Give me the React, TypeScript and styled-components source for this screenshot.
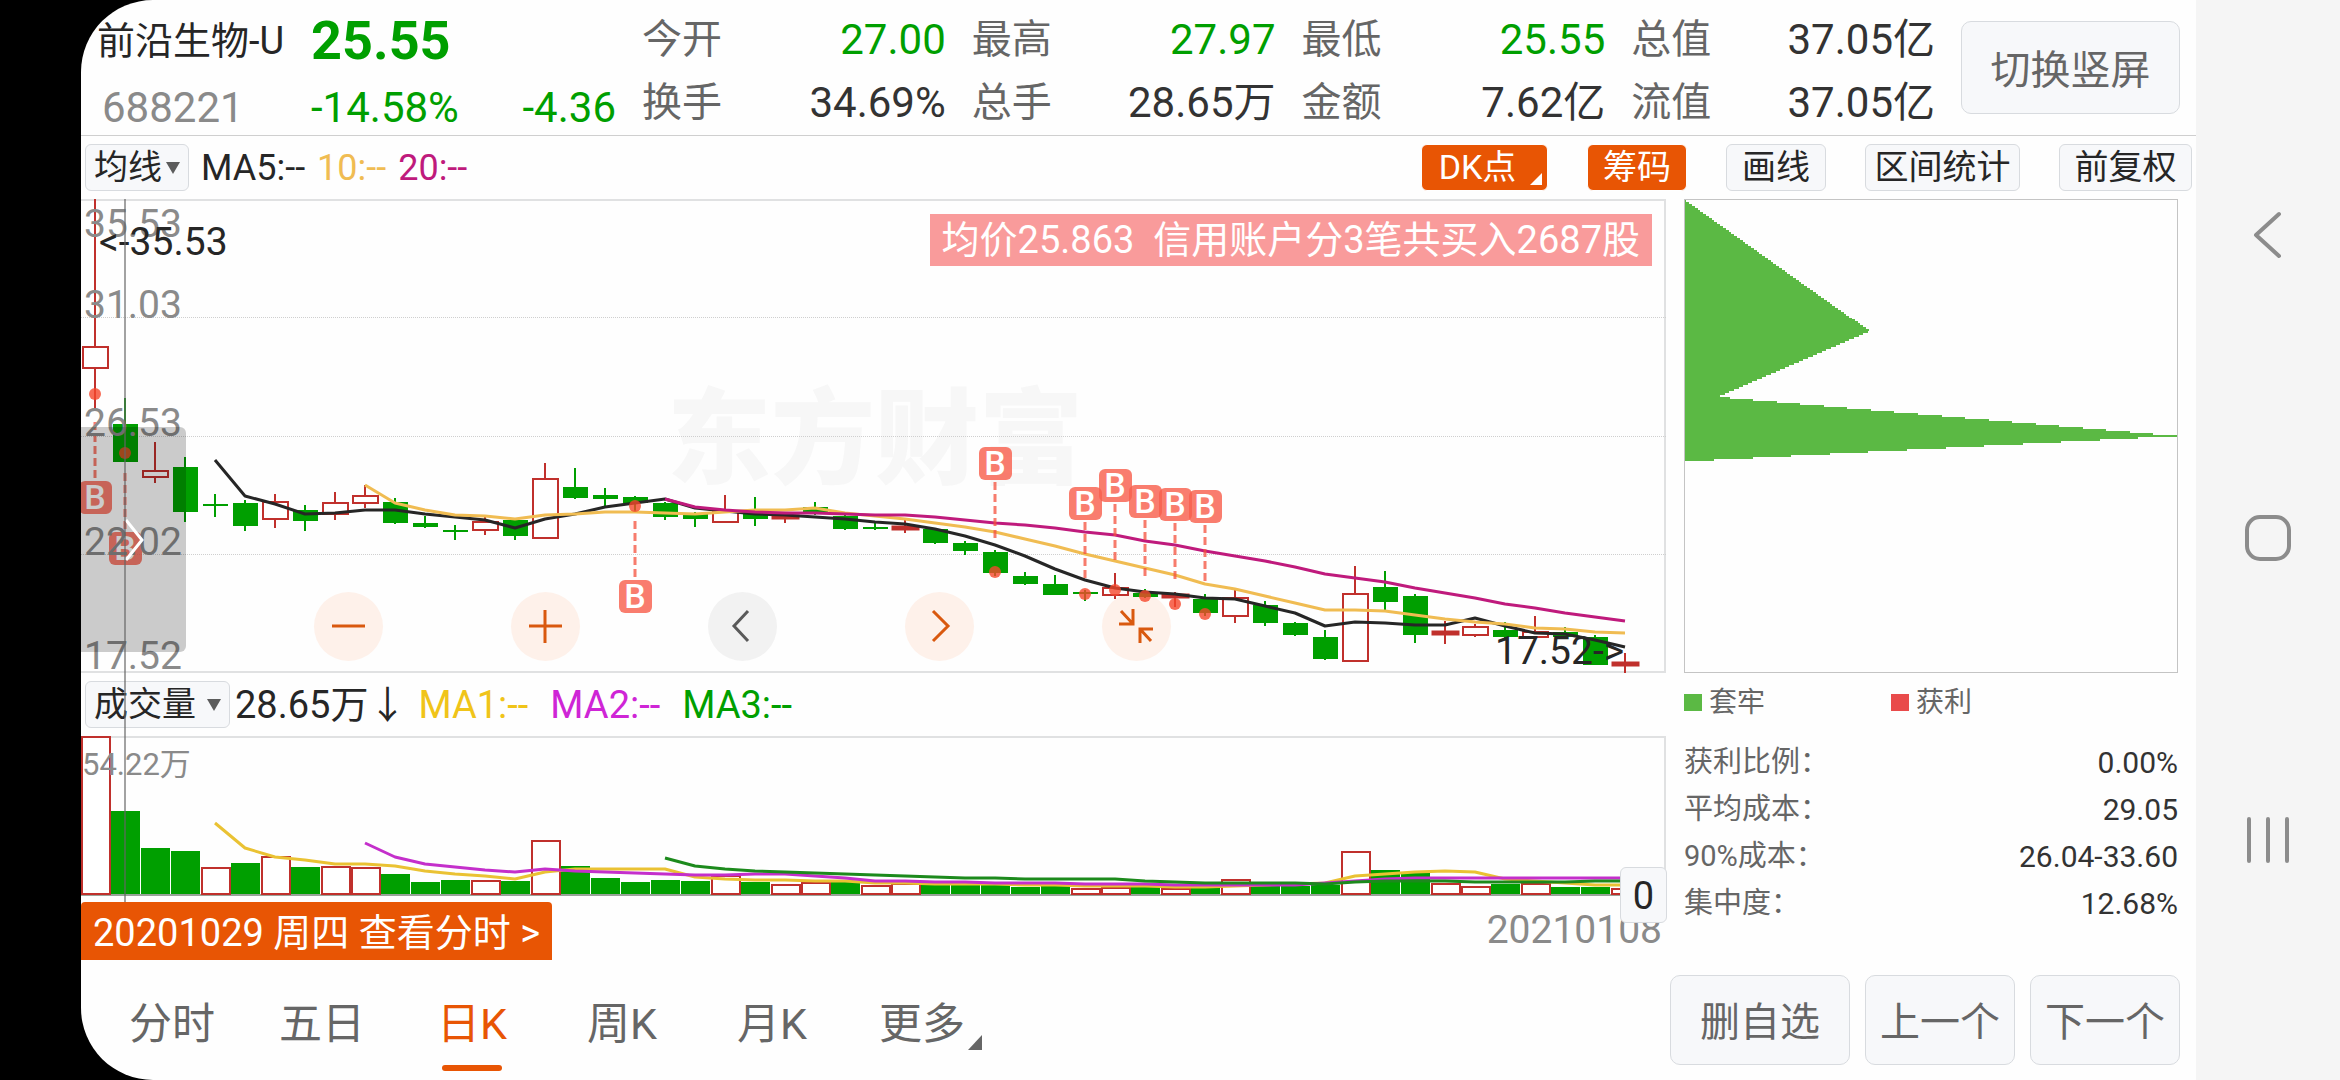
import React from 'react';
import styled, { createGlobalStyle, css } from 'styled-components';

const GREEN = '#009f00';
const RED = '#c0302c';
const ORANGE = '#e85504';
const LINE = '#e0e1e2';
const INK = '#262626';
const MUTED = '#666666';
const FAINT = '#8a8a8a';
const PANEL = '#f7f8fa';
const EDGE = '#d8dbdf';

const GlobalStyle = createGlobalStyle`
  *, *::before, *::after { box-sizing: border-box; }
  body {
    margin: 0;
    background: #000;
    color: ${INK};
    font-family: Roboto, "Noto Sans CJK SC", sans-serif;
    font-size: 38px;
  }
  button, select { font-family: inherit; margin: 0; cursor: pointer; }
  dl, dd, dt { margin: 0; }
`;

/* ---------- shell ---------- */

const Device = styled.div`
  display: flex;
  min-height: 100vh;
  padding-left: 81px;
  background: #000;
`;

const Screen = styled.main`
  flex: 1;
  min-width: 0;
  display: flex;
  flex-direction: column;
  background: #fefefe;
  border-radius: 72px 0 0 72px;
  overflow: hidden;
`;

const SystemBar = styled.nav`
  flex: none;
  width: 144px;
  padding: 211px 0 216px;
  display: flex;
  flex-direction: column;
  align-items: center;
  justify-content: space-between;
  background: #f5f5f5;
`;

const SystemKey = styled.button`
  width: 48px;
  height: 48px;
  padding: 0;
  border: 0;
  background: none;
  svg { display: block; }
`;

/* ---------- header ---------- */

const Header = styled.header`
  display: flex;
  height: 136px;
  padding-right: 16px;
  border-bottom: 1px solid #cfcfcf;
`;

const Identity = styled.section`
  flex: none;
  width: 561px;
  padding: 8px 26px 0 16px;
  display: grid;
  grid-template-columns: 214px 1fr auto;
  grid-template-rows: 66px 60px;
  align-items: center;
  row-gap: 4px;
  white-space: nowrap;
`;

const StockName = styled.h1`
  margin: 0;
  font-size: 38px;
  font-weight: 400;
  line-height: 60px;
`;

const Price = styled.strong`
  grid-column: span 2;
  font-size: 54px;
  font-weight: 700;
  line-height: 64px;
  color: ${GREEN};
`;

const Figure = styled.span<{ $color?: string; $indent?: boolean }>`
  font-size: 42px;
  line-height: 60px;
  color: ${p => p.$color ?? '#333'};
  padding-left: ${p => (p.$indent ? '5px' : 0)};
`;

const Stats = styled.dl`
  flex: 1;
  padding-top: 8px;
  display: grid;
  grid-template-columns: repeat(4, 1fr);
  grid-auto-rows: 63px;
  column-gap: 26px;
`;

const Stat = styled.div`
  display: flex;
  justify-content: space-between;
  align-items: center;
  white-space: nowrap;
  dt { font-size: 40px; line-height: 60px; color: ${MUTED}; }
`;

const SoftButton = styled.button<{ $width: number; $height: number }>`
  flex: none;
  width: ${p => p.$width}px;
  height: ${p => p.$height}px;
  padding: 6px 0 0;
  border: 1px solid ${EDGE};
  border-radius: 10px;
  background: ${PANEL};
  color: ${MUTED};
  font-size: 40px;
  line-height: 60px;
  white-space: nowrap;
`;

const RotateButton = styled(SoftButton)`
  margin: 21px 0 0 26px;
`;

/* ---------- toolbars ---------- */

const Toolbar = styled.div`
  display: flex;
  align-items: center;
  height: 63px;
  padding: 0 4px;
  white-space: nowrap;
`;

const Picker = styled.label<{ $width: number }>`
  position: relative;
  flex: none;
  width: ${p => p.$width}px;
  height: 47px;
  &::after {
    content: '';
    position: absolute;
    right: 9px;
    top: 18px;
    border: 7px solid transparent;
    border-top: 12px solid #5c5c5c;
    border-bottom: 0;
    pointer-events: none;
  }
  select {
    appearance: none;
    width: 100%;
    height: 100%;
    padding: 0 0 0 8px;
    border: 1px solid ${EDGE};
    border-radius: 6px;
    background: ${PANEL};
    color: ${INK};
    font-size: 34px;
    line-height: 45px;
  }
`;

const Averages = styled.div<{ $size: number; $gap: number }>`
  display: flex;
  gap: ${p => p.$gap}px;
  margin-left: 12px;
  font-size: ${p => p.$size}px;
  line-height: 48px;
`;

const VolumeNow = styled.span`
  margin-left: 5px;
  font-size: 38px;
  line-height: 48px;
`;

const Tint = styled.span<{ $color: string }>`
  color: ${p => p.$color};
`;

const Tools = styled.div`
  display: flex;
  gap: 39px;
  margin-left: auto;
`;

const Tool = styled.button<{ $active?: boolean; $width: number; $more?: boolean }>`
  position: relative;
  width: ${p => p.$width}px;
  height: 47px;
  padding: 0;
  border: 1px solid ${EDGE};
  border-radius: 6px;
  background: ${PANEL};
  color: ${INK};
  font-size: 34px;
  line-height: 45px;
  ${p => p.$active && css`
    border-color: #fff;
    background: ${ORANGE};
    color: #fff;
  `}
  ${p => p.$more && css`
    padding-right: 14px;
    &::after {
      content: '';
      position: absolute;
      right: 5px;
      bottom: 5px;
      border-left: 12px solid transparent;
      border-bottom: 12px solid #fff;
    }
  `}
`;

/* ---------- charts ---------- */

const Body = styled.div`
  display: flex;
  gap: 18px;
  padding-right: 18px;
`;

const ChartColumn = styled.section`
  position: relative;
  flex: 1;
  min-width: 0;
`;

const Crosshair = styled.div`
  position: absolute;
  top: 0;
  bottom: 58px;
  left: 43px;
  width: 2px;
  background: rgba(100, 100, 100, 0.6);
  pointer-events: none;
`;

const Pane = styled.div<{ $height: number }>`
  position: relative;
  height: ${p => p.$height}px;
  box-shadow: inset 0 2px ${LINE}, inset -2px 0 ${LINE}, inset 0 -2px ${LINE};
`;

const Plot = styled.svg`
  position: absolute;
  inset: 0;
  width: 100%;
  height: 100%;
  pointer-events: none;
`;

const Watermark = styled.div`
  position: absolute;
  left: 586px;
  top: 182px;
  font-size: 104px;
  font-weight: 900;
  line-height: 120px;
  color: #f7f7f7;
  white-space: nowrap;
`;

const Notice = styled.div`
  position: absolute;
  top: 15px;
  right: 14px;
  padding: 0 12px;
  background: #f99b9b;
  color: #fff;
  font-size: 38px;
  line-height: 52px;
  white-space: pre;
`;

const AxisLabel = styled.span<{ $top: number; $left?: number; $size?: number; $dark?: boolean }>`
  position: absolute;
  left: ${p => p.$left ?? 3}px;
  top: ${p => p.$top}px;
  font-size: ${p => p.$size ?? 39}px;
  line-height: 48px;
  color: ${p => (p.$dark ? INK : FAINT)};
  white-space: nowrap;
`;

const Controls = styled.div`
  position: absolute;
  left: 233px;
  top: 393px;
  display: flex;
  gap: 128px;
`;

const RoundButton = styled.button<{ $plain?: boolean }>`
  width: 69px;
  height: 69px;
  padding: 0;
  border: 0;
  border-radius: 50%;
  background: ${p => (p.$plain ? '#f2f2f2' : '#fef1ea')};
  color: ${p => (p.$plain ? '#5a5a5a' : '#d9590f')};
  svg { display: block; }
`;

const DrawerHandle = styled.button`
  position: absolute;
  left: 0;
  top: 228px;
  width: 105px;
  height: 225px;
  padding: 0;
  border: 0;
  border-radius: 0 6px 6px 0;
  background: rgba(0, 0, 0, 0.2);
  svg { display: block; }
`;

const ZeroTag = styled.span`
  position: absolute;
  right: -1px;
  top: 131px;
  width: 47px;
  height: 56px;
  border: 1px solid ${EDGE};
  border-radius: 6px;
  background: ${PANEL};
  font-size: 38px;
  line-height: 56px;
  text-align: center;
  z-index: 1;
`;

const DateRow = styled.div`
  display: flex;
  justify-content: space-between;
  margin-top: 6px;
  height: 58px;
  padding-right: 4px;
  color: ${FAINT};
  font-size: 39px;
  line-height: 56px;
`;

const DayLink = styled.a`
  padding: 3px 12px 0;
  border-radius: 4px 4px 0 0;
  background: ${ORANGE};
  color: #fff;
  font-size: 38px;
  line-height: 56px;
  text-decoration: none;
  white-space: nowrap;
`;

/* ---------- chip distribution ---------- */

const Side = styled.aside`
  flex: none;
  width: 494px;
`;

const ChipBox = styled.svg`
  display: block;
  width: 100%;
  height: 474px;
  border: 1px solid #c4c4c4;
`;

const Legend = styled.div`
  display: grid;
  grid-template-columns: 207px 1fr;
  align-content: center;
  height: 59px;
  margin-bottom: 7px;
  color: ${MUTED};
  font-size: 28px;
  line-height: 50px;
`;

const Key = styled.span<{ $color: string }>`
  display: flex;
  align-items: center;
  gap: 7px;
  &::before {
    content: '';
    width: 18px;
    height: 17px;
    background: ${p => p.$color};
  }
`;

const Fact = styled.div`
  display: flex;
  justify-content: space-between;
  height: 47px;
  line-height: 47px;
  dt { font-size: 29px; color: ${MUTED}; }
  dd { font-size: 30px; color: #333; }
`;

/* ---------- footer ---------- */

const Footer = styled.footer`
  display: flex;
  align-items: stretch;
  justify-content: space-between;
  height: 120px;
  padding: 0 16px;
`;

const Tabs = styled.div`
  display: flex;
`;

const Tab = styled.button<{ $active?: boolean; $more?: boolean }>`
  position: relative;
  width: 150px;
  padding: 7px 0 0;
  border: 0;
  background: none;
  color: ${p => (p.$active ? ORANGE : MUTED)};
  font-size: 43px;
  line-height: 60px;
  ${p => p.$active && css`
    &::after {
      content: '';
      position: absolute;
      left: 45px;
      bottom: 9px;
      width: 60px;
      height: 6px;
      border-radius: 3px;
      background: ${ORANGE};
    }
  `}
  ${p => p.$more && css`
    &::after {
      content: '';
      position: absolute;
      right: 15px;
      bottom: 30px;
      border-left: 14px solid transparent;
      border-bottom: 15px solid ${MUTED};
    }
  `}
`;

const Actions = styled.div`
  display: flex;
  align-items: center;
  gap: 15px;
`;

/* ---------- data ---------- */

type Candle = [up: 0 | 1, high: number, top: number, bottom: number, low: number];

const candles: Candle[] = [
  [1, 0, 148, 169, 209], [0, 199, 225, 263, 263], [1, 243, 272, 278, 284], [0, 258, 268, 313, 323],
  [0, 295, 305, 307, 318], [0, 301, 304, 327, 332], [1, 295, 303, 320, 329], [0, 306, 311, 322, 332],
  [1, 293, 304, 315, 321], [1, 286, 297, 304, 309], [0, 299, 303, 324, 325], [0, 317, 324, 328, 329],
  [0, 326, 331, 333, 341], [1, 318, 323, 331, 336], [0, 320, 321, 337, 341], [1, 264, 280, 339, 340],
  [0, 269, 288, 299, 300], [0, 289, 296, 300, 307], [0, 297, 298, 304, 313], [0, 303, 304, 318, 321],
  [0, 313, 315, 320, 328], [1, 296, 313, 323, 324], [0, 298, 313, 320, 327], [1, 313, 317, 319, 324],
  [0, 303, 308, 315, 316], [0, 316, 317, 330, 331], [0, 323, 328, 330, 331], [1, 321, 328, 330, 334],
  [0, 329, 330, 344, 345], [0, 342, 344, 352, 356], [0, 351, 353, 374, 377], [0, 373, 377, 385, 386],
  [0, 376, 385, 396, 396], [0, 391, 393, 395, 402], [1, 374, 389, 396, 400], [0, 390, 394, 398, 399],
  [1, 393, 396, 398, 408], [0, 395, 400, 414, 417], [1, 391, 399, 417, 424], [0, 402, 406, 424, 427],
  [0, 423, 424, 436, 437], [0, 431, 438, 460, 461], [1, 367, 395, 462, 462], [0, 372, 388, 403, 411],
  [0, 395, 397, 436, 444], [1, 422, 433, 435, 445], [1, 425, 428, 436, 438], [0, 423, 431, 438, 439],
  [1, 417, 433, 438, 439], [0, 428, 433, 438, 439], [0, 436, 438, 466, 466], [1, 454, 464, 466, 474],
];

const ma5 = [261, 297, 305, 315, 314, 311, 311, 315, 318, 321, 329, 320, 315, 308, 304, 300, 309, 312, 315, 316, 318, 320, 323, 325, 330, 337, 346, 357, 370, 381, 389, 393, 395, 399, 400, 407, 414, 427, 423, 424, 426, 426, 419, 427, 434, 435, 441, 448];
const ma10 = [286, 304, 311, 316, 317, 320, 316, 315, 313, 313, 314, 315, 313, 311, 311, 309, 314, 317, 320, 324, 328, 333, 340, 347, 355, 362, 369, 376, 385, 390, 397, 404, 411, 411, 412, 416, 420, 423, 425, 429, 430, 433, 434];
const ma20 = [300, 308, 311, 313, 314, 314, 315, 316, 316, 318, 321, 324, 326, 329, 333, 336, 342, 346, 352, 357, 362, 368, 375, 379, 383, 389, 394, 399, 405, 409, 414, 418, 422];

const volumes: [up: 0 | 1, top: number][] = [
  [1, 0], [0, 75], [0, 112], [0, 115], [1, 131], [0, 127], [1, 120], [0, 131], [1, 130], [1, 131],
  [0, 138], [0, 146], [0, 144], [1, 144], [0, 145], [1, 104], [0, 130], [0, 142], [0, 146], [0, 144],
  [0, 145], [1, 139], [0, 146], [1, 148], [1, 146], [0, 146], [1, 149], [1, 147], [0, 148], [0, 148],
  [0, 149], [0, 151], [0, 149], [1, 152], [1, 151], [0, 151], [1, 152], [0, 151], [1, 143], [0, 149],
  [0, 150], [0, 149], [1, 115], [0, 134], [0, 136], [1, 147], [1, 150], [0, 148], [1, 147], [0, 151],
  [0, 151], [1, 152],
];

const vma1 = [87, 112, 121, 124, 128, 128, 130, 135, 138, 140, 143, 136, 133, 133, 133, 133, 141, 143, 144, 144, 145, 145, 147, 147, 148, 148, 148, 149, 149, 150, 150, 150, 151, 151, 150, 149, 148, 147, 140, 138, 136, 135, 136, 143, 145, 147, 149, 149];
const vma2 = [107, 121, 128, 131, 134, 136, 133, 135, 136, 137, 138, 139, 139, 138, 138, 140, 142, 145, 145, 146, 146, 147, 147, 147, 148, 148, 148, 149, 149, 149, 149, 149, 147, 145, 143, 142, 142, 142, 142, 142, 142, 142, 142];
const vma3 = [122, 130, 133, 135, 136, 137, 138, 139, 140, 141, 142, 142, 143, 143, 143, 143, 145, 146, 147, 147, 147, 147, 148, 146, 145, 145, 145, 146, 146, 146, 146, 145, 145];

const buys: { day: number; badge: number; dot: number }[] = [
  { day: 0, badge: 298, dot: 195 },
  { day: 1, badge: 349, dot: 254 },
  { day: 18, badge: 397, dot: 307 },
  { day: 30, badge: 264, dot: 373 },
  { day: 33, badge: 304, dot: 395 },
  { day: 34, badge: 286, dot: 391 },
  { day: 35, badge: 302, dot: 397 },
  { day: 36, badge: 305, dot: 405 },
  { day: 37, badge: 307, dot: 415 },
];

const stats: [string, string, boolean][] = [
  ['今开', '27.00', true], ['最高', '27.97', true], ['最低', '25.55', true], ['总值', '37.05亿', false],
  ['换手', '34.69%', false], ['总手', '28.65万', false], ['金额', '7.62亿', false], ['流值', '37.05亿', false],
];

const facts: [string, string][] = [
  ['获利比例：', '0.00%'], ['平均成本：', '29.05'], ['90%成本：', '26.04-33.60'], ['集中度：', '12.68%'],
];

const prices: [string, number][] = [['35.53', 1], ['31.03', 82], ['26.53', 200], ['22.02', 319], ['17.52', 433]];

/* Outline of the chip distribution as [height, width] pairs. */
const chipOutline: [number, number][] = [[0, 0], [132, 186], [198, 33], [237, 494], [262, 10]];

const chipWidth = (y: number) => {
  for (let i = 1; i < chipOutline.length; i++) {
    const [y0, w0] = chipOutline[i - 1];
    const [y1, w1] = chipOutline[i];
    if (y <= y1) return w0 + ((w1 - w0) * (y - y0)) / (y1 - y0);
  }
  return 0;
};

const dayX = (i: number) => 14 + i * 30;

const linePoints = (values: number[]) => {
  const first = candles.length - values.length;
  return values.map((y, i) => `${dayX(first + i)},${y}`).join(' ');
};

/* ---------- drawings ---------- */

const Trend = ({ values, color }: { values: number[]; color: string }) => (
  <polyline points={linePoints(values)} fill="none" stroke={color} strokeWidth="3" strokeLinejoin="round" />
);

const CandleMark = ({ index, data }: { index: number; data: Candle }) => {
  const [up, high, top, bottom, low] = data;
  const x = dayX(index);
  if (!up) {
    return (
      <g fill={GREEN}>
        <rect x={x - 1} y={high} width={2} height={low - high} />
        <rect x={x - 12} y={top} width={25} height={bottom - top} />
      </g>
    );
  }
  return (
    <g fill="#fff" stroke={RED} strokeWidth={2}>
      <line x1={x} x2={x} y1={high} y2={top} />
      <line x1={x} x2={x} y1={bottom} y2={low} />
      <rect x={x - 12} y={top} width={25} height={bottom - top} strokeWidth={bottom - top < 4 ? 3 : 2} />
    </g>
  );
};

const BuyMark = ({ day, badge, dot }: { day: number; badge: number; dot: number }) => {
  const x = dayX(day);
  const start = badge < dot ? badge + 19 : badge - 75;
  return (
    <g>
      <line x1={x} x2={x} y1={start} y2={start + 57} stroke="#f4503c" strokeOpacity="0.75" strokeWidth="3" strokeDasharray="8 4" />
      <circle cx={x} cy={dot} r="6" fill="#f5472c" fillOpacity="0.8" />
      <rect x={x - 16} y={badge - 16} width="33" height="33" rx="6" fill="#f8604e" fillOpacity="0.82" />
      <text x={x} y={badge + 12} fill="#fff" fontSize="34" fontWeight="500" textAnchor="middle">B</text>
    </g>
  );
};

const PricePlot = () => (
  <Plot viewBox="0 0 1585 474" preserveAspectRatio="xMinYMid meet" aria-hidden="true">
    {[118, 237, 355].map(y => (
      <line key={y} x1="0" x2="1585" y1={y + 0.5} y2={y + 0.5} stroke="#cfcfcf" strokeDasharray="1 1" />
    ))}
    {candles.map((c, i) => <CandleMark key={i} index={i} data={c} />)}
    <Trend values={ma5} color="#262626" />
    <Trend values={ma10} color="#f0bc52" />
    <Trend values={ma20} color="#bf1a7c" />
    {buys.map(b => <BuyMark key={b.day} {...b} />)}
  </Plot>
);

const VolumePlot = () => (
  <Plot viewBox="0 0 1585 160" preserveAspectRatio="xMinYMid meet" aria-hidden="true">
    <rect x="0" y="158" width="1585" height="2" fill="#9aa39a" />
    {volumes.map(([up, top], i) =>
      up ? (
        <rect key={i} x={dayX(i) - 13} y={top + 1} width="28" height={157 - top} fill="#fff" stroke={RED} strokeWidth="2" />
      ) : (
        <rect key={i} x={dayX(i) - 14} y={top} width="29" height={158 - top} fill={GREEN} />
      ),
    )}
    <Trend values={vma1} color="#eac233" />
    <Trend values={vma2} color="#c42fcb" />
    <Trend values={vma3} color="#1c8a1c" />
  </Plot>
);

const Glyph = ({ d }: { d: string }) => (
  <svg width="69" height="69" viewBox="-34 -34 69 69" fill="none" stroke="currentColor" strokeWidth="3" aria-hidden="true">
    <path d={d} />
  </svg>
);

const controls: [string, string, boolean][] = [
  ['缩小', 'M-16 0H17', false],
  ['放大', 'M-16 0H17M0 -16V17', false],
  ['向左', 'M6 -15L-8 0L6 15', true],
  ['向右', 'M-6 -15L9 0L-6 15', false],
  ['收起', 'M-15 -15L-3 -2M-3 -17V-2H-17M15 15L4 3M4 17V3H17', false],
];

/* ---------- page ---------- */

export default function App() {
  return (
    <>
      <GlobalStyle />
      <Device>
        <Screen>
          <Header>
            <Identity>
              <StockName>前沿生物-U</StockName>
              <Price>25.55</Price>
              <Figure $color={FAINT} $indent>688221</Figure>
              <Figure $color={GREEN}>-14.58%</Figure>
              <Figure $color={GREEN}>-4.36</Figure>
            </Identity>
            <Stats>
              {stats.map(([name, value, down]) => (
                <Stat key={name}>
                  <dt>{name}</dt>
                  <Figure as="dd" $color={down ? GREEN : undefined}>{value}</Figure>
                </Stat>
              ))}
            </Stats>
            <RotateButton $width={219} $height={93}>切换竖屏</RotateButton>
          </Header>

          <Toolbar>
            <Picker $width={104}>
              <select aria-label="主图指标" defaultValue="均线">
                <option>均线</option>
              </select>
            </Picker>
            <Averages $size={36} $gap={12}>
              <span>MA5:--</span>
              <Tint $color="#f0bc52">10:--</Tint>
              <Tint $color="#bf1a7c">20:--</Tint>
            </Averages>
            <Tools>
              <Tool $active $more $width={127}>DK点</Tool>
              <Tool $active $width={100}>筹码</Tool>
              <Tool $width={100}>画线</Tool>
              <Tool $width={155}>区间统计</Tool>
              <Tool $width={133}>前复权</Tool>
            </Tools>
          </Toolbar>

          <Body>
            <ChartColumn>
              <Pane $height={474}>
                <Watermark>东方财富</Watermark>
                <Controls>
                  {controls.map(([name, d, plain]) => (
                    <RoundButton key={name} $plain={plain} aria-label={name}><Glyph d={d} /></RoundButton>
                  ))}
                </Controls>
                <PricePlot />
                {prices.map(([text, top]) => <AxisLabel key={text} $top={top}>{text}</AxisLabel>)}
                <AxisLabel $dark $left={18} $top={19}>{'<-35.53'}</AxisLabel>
                <AxisLabel $dark $left={1414} $top={428}>{'17.52->'}</AxisLabel>
                <Notice>{'均价25.863  信用账户分3笔共买入2687股'}</Notice>
                <DrawerHandle aria-label="展开">
                  <svg width="105" height="225" viewBox="0 0 105 225" fill="none" stroke="#fff" strokeWidth="3" aria-hidden="true">
                    <path d="M45 93L61 113L45 133" />
                  </svg>
                </DrawerHandle>
              </Pane>
              <Toolbar>
                <Picker $width={145}>
                  <select aria-label="副图指标" defaultValue="成交量">
                    <option>成交量</option>
                  </select>
                </Picker>
                <VolumeNow>28.65万↓</VolumeNow>
                <Averages $size={38} $gap={22}>
                  <Tint $color="#f0c419">MA1:--</Tint>
                  <Tint $color="#cf25d6">MA2:--</Tint>
                  <Tint $color={GREEN}>MA3:--</Tint>
                </Averages>
              </Toolbar>
              <Pane $height={160}>
                <VolumePlot />
                <AxisLabel $left={1} $top={5} $size={31}>54.22万</AxisLabel>
                <ZeroTag>0</ZeroTag>
              </Pane>
              <DateRow>
                <DayLink href="#day">{'20201029 周四 查看分时 >'}</DayLink>
                <span>20210108</span>
              </DateRow>
              <Crosshair />
            </ChartColumn>

            <Side>
              <ChipBox viewBox="0 0 494 474" preserveAspectRatio="none" role="img" aria-label="筹码分布">
                {Array.from({ length: 131 }, (_, i) => (
                  <rect key={i} x="0" y={i * 2} width={chipWidth(i * 2 + 1)} height="2" fill="#5bb944" shapeRendering="crispEdges" />
                ))}
              </ChipBox>
              <Legend>
                <Key $color="#5bb944">套牢</Key>
                <Key $color="#e94b4b">获利</Key>
              </Legend>
              <dl>
                {facts.map(([name, value]) => (
                  <Fact key={name}><dt>{name}</dt><dd>{value}</dd></Fact>
                ))}
              </dl>
            </Side>
          </Body>

          <Footer>
            <Tabs>
              <Tab>分时</Tab>
              <Tab>五日</Tab>
              <Tab $active>日K</Tab>
              <Tab>周K</Tab>
              <Tab>月K</Tab>
              <Tab $more>更多</Tab>
            </Tabs>
            <Actions>
              <SoftButton $width={180} $height={90}>删自选</SoftButton>
              <SoftButton $width={150} $height={90}>上一个</SoftButton>
              <SoftButton $width={150} $height={90}>下一个</SoftButton>
            </Actions>
          </Footer>
        </Screen>

        <SystemBar>
          <SystemKey aria-label="返回">
            <svg width="48" height="48" viewBox="0 0 48 48" fill="none" stroke="#8c8c8c" strokeWidth="4" strokeLinecap="round" strokeLinejoin="round">
              <path d="M35 3L12 24L35 45" />
            </svg>
          </SystemKey>
          <SystemKey aria-label="主页">
            <svg width="48" height="48" viewBox="0 0 48 48" fill="none" stroke="#8c8c8c" strokeWidth="4">
              <rect x="3" y="3" width="42" height="42" rx="13" />
            </svg>
          </SystemKey>
          <SystemKey aria-label="最近任务">
            <svg width="48" height="48" viewBox="0 0 48 48" fill="none" stroke="#8c8c8c" strokeWidth="4" strokeLinecap="round">
              <path d="M5 3V45M24 3V45M43 3V45" />
            </svg>
          </SystemKey>
        </SystemBar>
      </Device>
    </>
  );
}
